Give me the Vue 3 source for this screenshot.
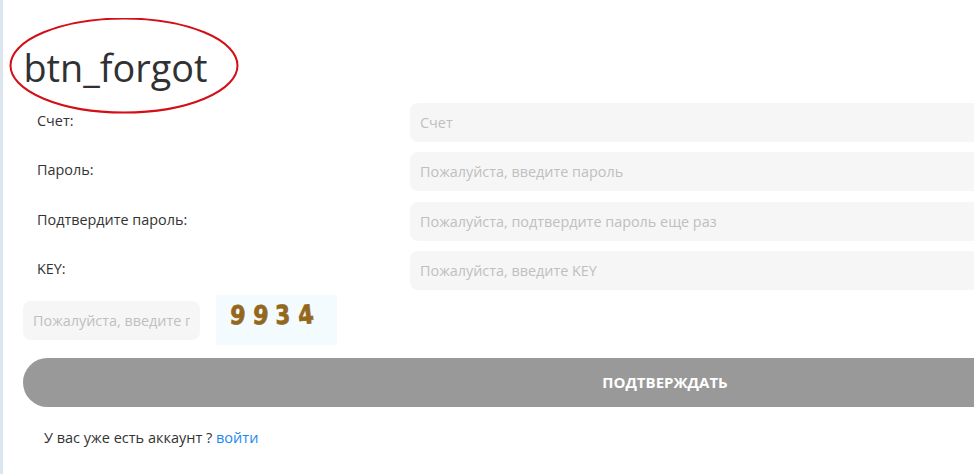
<script setup>
const rows = [
  { label: 'Счет:', ph: 'Счет' },
  { label: 'Пароль:', ph: 'Пожалуйста, введите пароль' },
  { label: 'Подтвердите пароль:', ph: 'Пожалуйста, подтвердите пароль еще раз' },
  { label: 'KEY:', ph: 'Пожалуйста, введите KEY' },
]
const digits = ['9', '9', '3', '4']
</script>

<template>
  <div class="page">
    <svg class="ring" width="232" height="98" viewBox="0 0 232 98">
      <ellipse cx="115" cy="47.5" rx="113.5" ry="47" fill="none" stroke="#d40d16" stroke-width="2" />
    </svg>
    <h1 class="title">btn_forgot</h1>
    <form class="form" @submit.prevent>
      <div v-for="r in rows" :key="r.label" class="row">
        <label class="label">{{ r.label }}</label>
        <input class="field wide" :placeholder="r.ph" />
      </div>
      <div class="captcha-row">
        <input class="field small" placeholder="Пожалуйста, введите проверочный код" />
        <div class="captcha">
          <span v-for="(d, i) in digits" :key="i" class="digit">{{ d }}</span>
        </div>
      </div>
      <button class="submit" type="button">ПОДТВЕРЖДАТЬ</button>
      <p class="foot">У вас уже есть аккаунт ? <a class="link" href="#">войти</a></p>
    </form>
  </div>
</template>

<style>
html, body { margin: 0; background: #fff; overflow: hidden; }
</style>

<style scoped>
.page {
  position: relative;
  box-sizing: border-box;
  width: 974px;
  height: 474px;
  overflow: hidden;
  background: #fff;
  border-left: 3px solid #dce6f1;
  font-family: "Open Sans", "Noto Sans", sans-serif;
  color: #333;
}
.ring { position: absolute; left: 6px; top: 18px; }
.title {
  margin: 0;
  padding: 41px 0 0 20.5px;
  height: 62px;
  font-size: 37.8px;
  line-height: 54px;
  font-weight: 400;
  color: #2f3133;
}
.form { display: flex; flex-direction: column; padding-left: 20px; }
.row {
  display: flex;
  height: 39px;
  margin-bottom: 10.4px;
}
.label {
  flex: none;
  width: 387px;
  padding: 8px 0 0 14px;
  box-sizing: border-box;
  font-size: 14.4px;
  line-height: 20px;
  color: #333;
}
.field {
  flex: none;
  box-sizing: border-box;
  height: 39px;
  border: 0;
  outline: 0;
  border-radius: 8px;
  background: #f6f6f6;
  padding: 0 10px;
  font: 14.4px "Open Sans", "Noto Sans", sans-serif;
  color: #333;
}
.field::placeholder { color: #bfbfbf; opacity: 1; }
.wide { width: 600px; }
.small { width: 177px; }
.captcha-row { display: flex; align-items: center; gap: 16px; height: 50px; margin-top: -5.1px; }
.captcha {
  width: 121px;
  height: 50px;
  background: #f4fbff;
  display: flex;
  align-items: flex-start;
  padding: 4px 0 0 13px;
  gap: 8.5px;
  box-sizing: border-box;
}
.digit {
  font: bold 26px/32px "DejaVu Sans", sans-serif;
  color: #93681c;
  width: 14px;
  display: inline-block;
  text-align: center;
  transform: rotate(5deg) scaleX(0.86);
  -webkit-text-stroke: 0.8px #93681c;
}
.digit:nth-child(3) { transform: rotate(-3deg) scaleX(0.82); }
.digit:nth-child(4) { transform: rotate(-6deg) scaleX(0.86); }
.submit {
  margin-top: 13px;
  width: 1284px;
  height: 49px;
  border: 0;
  border-radius: 25px;
  background: #999;
  color: #fff;
  font: 700 15px "Open Sans", "Noto Sans", sans-serif;
  padding: 0 0 2px;
}
.foot {
  margin: 20.5px 0 0 21px;
  font-size: 14.5px;
  line-height: 20px;
  color: #333;
}
.link { color: #1e88f0; text-decoration: none; }
</style>
